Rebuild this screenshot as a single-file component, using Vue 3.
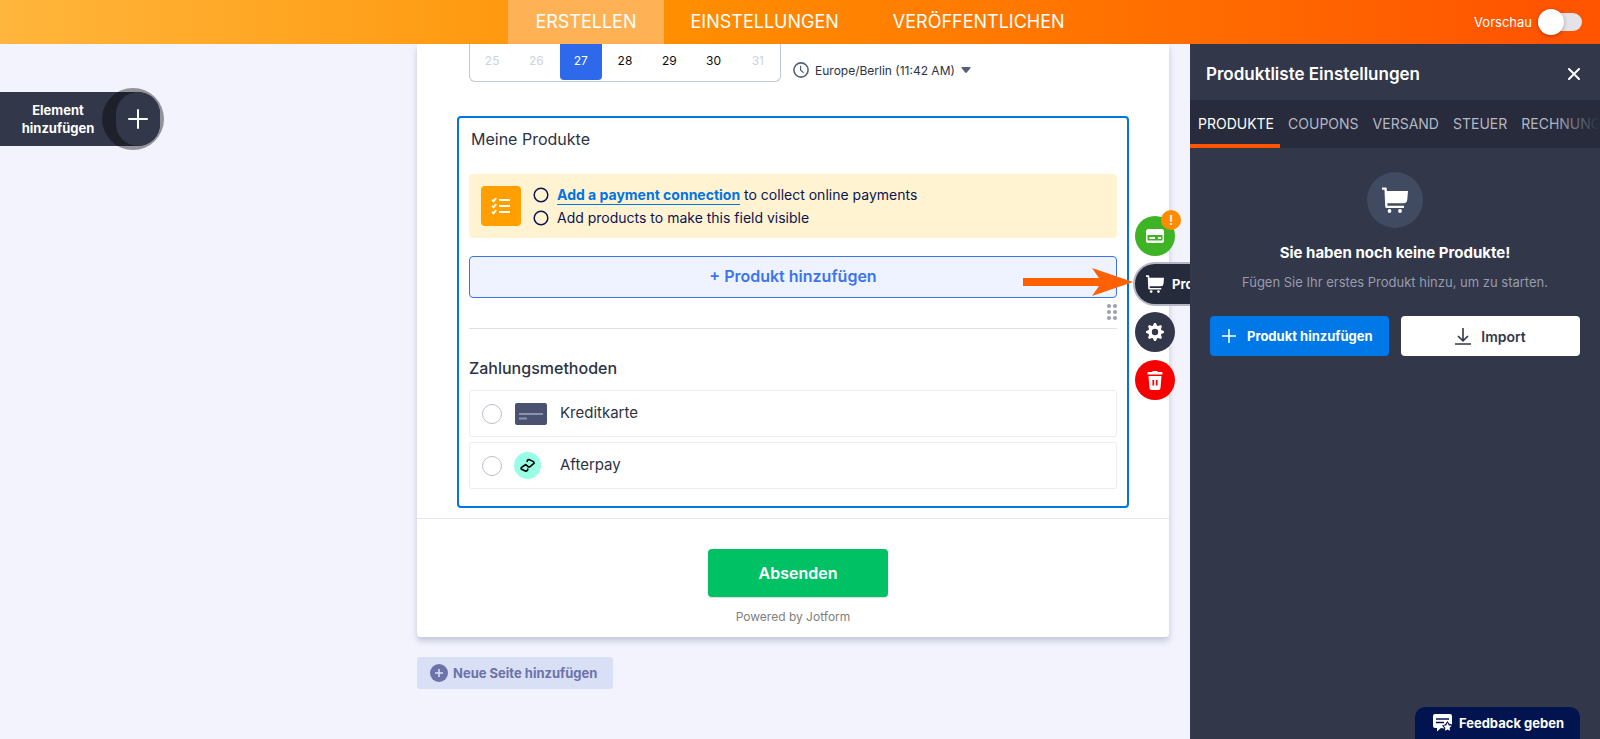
<template>
  <div class="builder">
    <header class="topbar">
      <nav class="topnav">
        <a
          v-for="item in navItems"
          :key="item"
          href="#"
          :class="{ active: item === activeNav }"
          @click.prevent="activeNav = item"
        >{{ item }}</a>
      </nav>
      <label class="preview">
        <span>Vorschau</span>
        <input v-model="preview" type="checkbox" role="switch" />
      </label>
    </header>

    <div class="workspace">
      <main class="canvas">
        <button class="add-element" type="button">
          <span class="add-label">Element hinzufügen</span>
          <span class="ring"></span>
          <span class="add-plus">
            <svg width="20" height="20" viewBox="0 0 20 20">
              <path d="M10 1v18M1 10h18" stroke="#fff" stroke-width="2" stroke-linecap="round" />
            </svg>
          </span>
        </button>

        <div class="form-column">
          <section class="form">
            <div class="appointment">
              <div class="calendar">
                <button
                  v-for="day in days"
                  :key="day.n"
                  type="button"
                  :disabled="day.off"
                  :class="{ selected: day.n === selectedDay }"
                  @click="selectedDay = day.n"
                >{{ day.n }}</button>
              </div>
              <div class="timezone">
                <svg width="16" height="16" viewBox="0 0 16 16" fill="none" stroke="#546079">
                  <circle cx="8" cy="8" r="7.1" stroke-width="1.6" />
                  <path d="M7.6 3.8v4.4l3 2.6" stroke-width="1.2" />
                </svg>
                <select v-model="timezone" aria-label="Zeitzone">
                  <option>Europe/Berlin (11:42 AM)</option>
                </select>
                <svg width="10" height="6" viewBox="0 0 10 6">
                  <path d="M1 0h8q1 0 .5 1L5.800 5.500q-.8.8-1.600 0L.5 1Q0 0 1 0z" fill="#546079" />
                </svg>
              </div>
            </div>

            <div class="product-field">
              <h2 class="field-title">Meine Produkte</h2>

              <div class="notice">
                <span class="notice-icon">
                  <svg width="20" height="18" viewBox="0 0 20 18" fill="none" stroke="#fff" stroke-width="2">
                    <path d="M8 3h11M8 9h11M8 15h11" />
                    <path d="M1 2.800l1.500 1.500L5.200 1M1 8.800l1.500 1.500L5.200 7M1 14.800l1.500 1.500L5.200 13" stroke-width="1.800" />
                  </svg>
                </span>
                <ul>
                  <li v-for="todo in todos" :key="todo.text">
                    <svg width="16" height="16" viewBox="0 0 16 16">
                      <circle cx="8" cy="8" r="6.800" fill="none" stroke="#0a1551" stroke-width="1.500" />
                    </svg>
                    <span><a v-if="todo.link" href="#">{{ todo.link }}</a> {{ todo.text }}</span>
                  </li>
                </ul>
              </div>

              <button class="add-product" type="button">+ Produkt hinzufügen</button>

              <div class="drag-row">
                <svg width="10" height="16" viewBox="0 0 10 16" fill="#9a9fb4">
                  <template v-for="y in [2, 8, 14]" :key="y">
                    <circle cx="2" :cy="y" r="2" />
                    <circle cx="8" :cy="y" r="2" />
                  </template>
                </svg>
              </div>

              <h3 class="methods-title">Zahlungsmethoden</h3>
              <div class="methods">
                <label>
                  <input v-model="method" type="radio" name="method" value="card" />
                  <span class="method-icon">
                    <svg width="33" height="22" viewBox="0 0 33 22">
                      <rect x="1" width="32" height="22" rx="2" fill="#4a5270" />
                      <path d="M5 11h24M5 15.500h8" stroke="#8b91b3" stroke-width="1.800" />
                    </svg>
                  </span>
                  <span class="method-name">Kreditkarte</span>
                </label>
                <label>
                  <input v-model="method" type="radio" name="method" value="afterpay" />
                  <span class="method-icon">
                    <svg width="27" height="27" viewBox="0 0 27 27">
                      <circle cx="13.500" cy="13.500" r="13.500" fill="#98ffe5" />
                      <path
                        d="M13 10L13.600 8L15 7.500L19.500 9.600L20.200 11.200L15.800 14.900L14.300 14.900L11.800 12.500L7.200 15.600L7.200 17L11.700 19.300L13.400 18.600L14 16.500"
                        fill="none" stroke="#000" stroke-width="1.600" stroke-linejoin="round"
                      />
                    </svg>
                  </span>
                  <span class="method-name">Afterpay</span>
                </label>
              </div>

              <!-- field tools, hanging on the right edge -->
              <div class="tools">
                <button class="tool green" type="button" aria-label="Zahlung">
                  <svg width="18" height="14" viewBox="0 0 18 14">
                    <rect width="18" height="14" rx="2.500" fill="#fff" />
                    <rect x="1.500" y="6" width="15" height="5.500" rx=".5" fill="#3eb324" />
                    <path d="M3.500 9h5.500M12 9h3" stroke="#fff" stroke-width="2" />
                  </svg>
                  <b class="badge">!</b>
                </button>
                <button class="tool cart" type="button">
                  <svg width="18" height="18" viewBox="0 0 26 26" fill="#fff">
                    <path :d="cartPath" />
                    <circle cx="7.500" cy="24" r="1.900" />
                    <circle cx="18" cy="24" r="1.900" />
                  </svg>
                  <span>Produkte</span>
                </button>
                <button class="tool" type="button" aria-label="Eigenschaften">
                  <svg width="18" height="18" viewBox="-9 -9 18 18">
                    <path v-for="a in [0, 45, 90, 135]" :key="a" d="M-.8-9h1.600L2.800-5V5L.8 9h-1.600L-2.800 5V-5z" :transform="`rotate(${a})`" fill="#fff" />
                    <circle r="6.400" fill="#fff" />
                    <circle r="3.200" fill="#32374a" />
                  </svg>
                </button>
                <button class="tool red" type="button" aria-label="Löschen">
                  <svg width="16" height="19" viewBox="0 0 16 19">
                    <path d="M.5 2Q.5 1 1.500 1H5l1-1h4l1 1h3.500q1 0 1 1v1.500H.5zM1.500 5h13l-1 12q-.2 2-2 2h-7q-1.800 0-2-2z" fill="#fff" />
                    <path d="M6.300 9v5.500M9.700 9v5.500" stroke="#f90000" stroke-width="1.700" />
                  </svg>
                </button>
              </div>

              <svg class="arrow" width="110" height="28" viewBox="0 0 110 28">
                <path d="M0 10h76L69 0l41 14-41 14 7-10H0z" fill="#ff6100" />
              </svg>
            </div>

            <footer class="form-footer">
              <button class="submit" type="button">Absenden</button>
              <p>Powered by Jotform</p>
            </footer>
          </section>

          <button class="new-page" type="button">
            <svg width="18" height="18" viewBox="0 0 18 18">
              <circle cx="9" cy="9" r="9" fill="#6c73a8" />
              <path d="M9 5v8M5 9h8" stroke="#d9dff5" stroke-width="1.600" />
            </svg>
            Neue Seite hinzufügen
          </button>
        </div>
      </main>

      <aside class="panel">
        <div class="panel-head">
          <h2>Produktliste Einstellungen</h2>
          <button type="button" aria-label="Schließen">
            <svg width="12" height="12" viewBox="0 0 12 12">
              <path d="M1 1l10 10M11 1L1 11" stroke="#fff" stroke-width="2" stroke-linecap="round" />
            </svg>
          </button>
        </div>
        <div class="tabs">
          <button
            v-for="tab in tabs"
            :key="tab"
            type="button"
            :class="{ active: tab === activeTab }"
            @click="activeTab = tab"
          >{{ tab }}</button>
        </div>
        <div class="empty">
          <span class="empty-icon">
            <svg width="26" height="26" viewBox="0 0 26 26" fill="#fff">
              <path :d="cartPath" />
              <circle cx="7.500" cy="24" r="1.900" />
              <circle cx="18" cy="24" r="1.900" />
            </svg>
          </span>
          <h3>Sie haben noch keine Produkte!</h3>
          <p>Fügen Sie Ihr erstes Produkt hinzu, um zu starten.</p>
          <div class="actions">
            <button class="primary" type="button">
              <svg width="14" height="14" viewBox="0 0 14 14">
                <path d="M7 0v14M0 7h14" stroke="#fff" stroke-width="1.500" />
              </svg>
              Produkt hinzufügen
            </button>
            <button class="plain" type="button">
              <svg width="16" height="17" viewBox="0 0 16 17" fill="none" stroke="#32374a" stroke-width="1.600">
                <path d="M8 0v12.500M3 8l5 4.800L13 8M0 16h16" />
              </svg>
              Import
            </button>
          </div>
        </div>
      </aside>
    </div>

    <button class="feedback" type="button">
      <svg width="19" height="18" viewBox="0 0 19 18">
        <path d="M2 0h15q2 0 2 2v8.500l-3-1-1.500-2.500-2.500 3.500-3 1 2.500 3L8 14l-4 3.500V14H2q-2 0-2-2V2q0-2 2-2z" fill="#fff" />
        <path d="M3 5h13M3 8.500h8" stroke="#02144f" stroke-width="1.500" />
        <path d="M14.500 8.800l1.300 2.600 2.900.4-2.100 2 .5 2.900-2.600-1.300-2.600 1.300.5-2.900-2.100-2 2.900-.4z" fill="#fff" />
      </svg>
      Feedback geben
    </button>
  </div>
</template>

<script setup>
import { ref } from 'vue'

const navItems = ['ERSTELLEN', 'EINSTELLUNGEN', 'VERÖFFENTLICHEN']
const activeNav = ref('ERSTELLEN')
const preview = ref(false)

const days = [25, 26, 27, 28, 29, 30, 31].map((n) => ({ n, off: n < 27 || n > 30 }))
const selectedDay = ref(27)
const timezone = ref('Europe/Berlin (11:42 AM)')
const method = ref('')

const todos = [
  { link: 'Add a payment connection', text: 'to collect online payments' },
  { text: 'Add products to make this field visible' },
]

const tabs = ['PRODUKTE', 'COUPONS', 'VERSAND', 'STEUER', 'RECHNUNG']
const activeTab = ref('PRODUKTE')

// shared by the field tool and the empty state
const cartPath = 'M0 .5h3.500q1.300 0 1.300 1.300V4H26l-.7 8.500Q25 16.300 21.500 16.300H5.400l.1 2.400H22v2.300H4.800q-1.500 0-1.600-1.500L2.500 2.800H0z'
</script>

<style>
body {
  background: #f3f3fe;
}
</style>

<style scoped>
.builder {
  display: flex;
  flex-direction: column;
  min-height: 100vh;
  overflow: hidden;
  font-family: Inter, "Liberation Sans", sans-serif;
  color: #2c3345;
}

.builder *, .builder *::before {
  box-sizing: border-box;
}

button, select {
  font: inherit;
  color: inherit;
  border: 0;
  padding: 0;
  margin: 0;
  background: none;
  cursor: pointer;
}

h2, h3, p, ul {
  margin: 0;
  padding: 0;
  font-weight: 400;
}

svg {
  display: block;
  flex: none;
}

/* top bar */
.topbar {
  display: grid;
  grid-template-columns: 1fr auto 1fr;
  height: 44px;
  background: linear-gradient(90deg, #ffb63c 0%, #ff8f00 42%, #ff5400 97%);
  color: #fff;
}

.topnav {
  grid-column: 2;
  display: flex;
}

.topnav a {
  display: flex;
  align-items: center;
  padding: 0 27px 2px;
  font-size: 18px;
  color: #fff;
  text-decoration: none;
}

.topnav a.active {
  background: #ffb255;
}

.preview {
  display: flex;
  align-items: center;
  justify-content: flex-end;
  gap: 6px;
  padding-right: 18px;
  font-size: 13px;
}

.preview input {
  appearance: none;
  position: relative;
  width: 44px;
  height: 18px;
  margin: 0;
  border-radius: 9px;
  background: #e3e3e8;
}

.preview input::before {
  content: "";
  position: absolute;
  left: 0;
  top: -4px;
  width: 26px;
  height: 26px;
  border-radius: 50%;
  background: #fff;
  box-shadow: 0 1px 4px rgba(0, 0, 0, 0.3);
}

.preview input:checked::before {
  left: 18px;
}

.workspace {
  flex: 1;
  display: flex;
}

.canvas {
  flex: 1;
  min-width: 0;
  display: flex;
  justify-content: space-between;
  align-items: flex-start;
  padding-right: 21px;
}

/* add element */
.add-element {
  position: relative;
  display: flex;
  align-items: center;
  width: 160px;
  height: 54px;
  margin-top: 48px;
  border-radius: 0 22px 22px 0;
  background: #32374a;
  color: #fff;
}

.add-label {
  width: 116px;
  padding: 0 16px;
  font-size: 13px;
  font-weight: 700;
  line-height: 18px;
}

.ring {
  position: absolute;
  right: -4px;
  top: -4px;
  width: 62px;
  height: 62px;
  border-radius: 50%;
  background: rgba(0, 0, 0, 0.4);
}

.add-plus {
  position: relative;
  display: flex;
  align-items: center;
  justify-content: center;
  width: 44px;
  height: 54px;
  border-radius: 22px;
  background: #32374a;
}

/* form */
.form-column {
  width: 752px;
}

.form {
  background: #fff;
  border-radius: 0 0 4px 4px;
  box-shadow: 0 4px 6px rgba(84, 95, 140, 0.3);
}

.appointment {
  display: flex;
  align-items: flex-start;
  gap: 12px;
  height: 38px;
  padding: 0 52px;
}

.calendar {
  display: grid;
  grid-template-columns: repeat(7, 1fr);
  width: 312px;
  padding-bottom: 1px;
  border: 1px solid #c0c7dc;
  border-top: 0;
  border-radius: 0 0 6px 6px;
}

.calendar button {
  justify-self: center;
  width: 42px;
  height: 36px;
  padding-bottom: 3px;
  font-size: 12px;
  color: #0a0a0f;
}

.calendar button:disabled {
  color: #cdd2de;
}

.calendar button.selected {
  border-radius: 0 0 4px 4px;
  background: #2e69ec;
  color: #fff;
}

.timezone {
  display: flex;
  align-items: center;
  gap: 6px;
  height: 52px;
}

.timezone select {
  appearance: none;
  font-size: 12px;
}

.product-field {
  position: relative;
  margin: 34px 40px 0;
  padding: 11px 10px 17px;
  border: 2px solid #0075e3;
  border-radius: 4px;
}

.field-title {
  padding-left: 2px;
  font-size: 16px;
  line-height: 20px;
}

.notice {
  display: flex;
  align-items: center;
  gap: 12px;
  height: 64px;
  margin-top: 25px;
  padding: 0 12px;
  border-radius: 4px;
  background: #fff3d2;
  color: #0a1551;
  font-size: 14px;
}

.notice-icon {
  display: flex;
  align-items: center;
  justify-content: center;
  width: 40px;
  height: 40px;
  border-radius: 4px;
  background: #ffa000;
}

.notice li {
  display: flex;
  align-items: center;
  gap: 8px;
  line-height: 23px;
}

.notice a {
  padding-bottom: 1px;
  border-bottom: 1px solid #0075e3;
  color: #0075e3;
  font-weight: 700;
  text-decoration: none;
}

.add-product {
  display: block;
  width: 100%;
  height: 42px;
  margin-top: 18px;
  padding-bottom: 2px;
  border: 1px solid #3b74ea;
  border-radius: 4px;
  background: #eef3ff;
  color: #3b74f0;
  font-size: 16px;
  font-weight: 600;
}

.drag-row {
  display: flex;
  justify-content: flex-end;
  height: 31px;
  padding-top: 6px;
  border-bottom: 1px solid #dde0ea;
}

.methods-title {
  margin-top: 29px;
  font-size: 16px;
  font-weight: 500;
  line-height: 20px;
}

.methods {
  display: flex;
  flex-direction: column;
  gap: 5px;
  margin-top: 12px;
}

.methods label {
  display: flex;
  align-items: center;
  height: 47px;
  padding-left: 12px;
  border: 1px solid #ecedf0;
  border-radius: 3px;
  font-size: 15px;
}

.methods input {
  appearance: none;
  width: 20px;
  height: 20px;
  margin: 0 12px 0 0;
  border: 1px solid #bbc0ce;
  border-radius: 50%;
  background: #fff;
}

.methods input:checked {
  border: 6px solid #2e69ff;
}

.method-icon {
  width: 46px;
}

.method-name {
  padding-bottom: 2px;
}

.tools {
  position: absolute;
  left: 100%;
  top: 98px;
  margin-left: 8px;
  display: flex;
  flex-direction: column;
  gap: 8px;
}

.tool {
  position: relative;
  display: flex;
  align-items: center;
  justify-content: center;
  width: 40px;
  height: 40px;
  border-radius: 50%;
  background: #32374a;
}

.tool.green {
  background: #3eb324;
}

.tool.red {
  background: #f90000;
}

.tool.cart {
  justify-content: flex-start;
  gap: 8px;
  width: 120px;
  padding-left: 11px;
  border-radius: 20px;
  background: #262b3b;
  box-shadow: 0 0 0 2px #b4b6c8;
  color: #fff;
  font-size: 13px;
  font-weight: 700;
}

.badge {
  position: absolute;
  right: -6px;
  top: -6px;
  width: 20px;
  border-radius: 50%;
  background: #ff8b00;
  color: #fff;
  font-size: 13px;
  font-weight: 600;
  line-height: 20px;
}

.arrow {
  position: absolute;
  right: -6px;
  top: 150px;
}

.form-footer {
  display: flex;
  flex-direction: column;
  align-items: center;
  margin-top: 10px;
  padding: 30px 0 12px;
  border-top: 1px solid #e3e5f0;
}

.submit {
  width: 180px;
  height: 48px;
  margin-left: 10px;
  border-radius: 4px;
  background: #01c165;
  box-shadow: 0 1px 1px rgba(0, 0, 0, 0.15);
  color: #fff;
  font-size: 16px;
  font-weight: 600;
}

.form-footer p {
  margin-top: 12px;
  font-size: 12px;
  line-height: 16px;
  color: #808080;
}

.new-page {
  display: flex;
  align-items: center;
  gap: 5px;
  height: 32px;
  margin: 20px 0;
  padding: 0 16px 0 13px;
  border-radius: 3px;
  background: #d9dff5;
  color: #6c73a8;
  font-size: 13px;
  font-weight: 700;
}

/* settings panel */
.panel {
  position: relative;
  flex: none;
  width: 410px;
  background: #32374a;
  color: #fff;
}

.panel-head {
  display: flex;
  align-items: center;
  justify-content: space-between;
  height: 56px;
  padding: 4px 20px 0 16px;
}

.panel-head h2 {
  font-size: 17px;
  font-weight: 600;
}

.tabs {
  position: relative;
  display: flex;
  height: 48px;
  overflow: hidden;
  background: #272b3b;
}

/* fade of the tabs that run past the edge */
.tabs::after {
  content: "";
  position: absolute;
  right: 0;
  top: 0;
  width: 48px;
  height: 48px;
  background: linear-gradient(90deg, rgba(39, 43, 59, 0), #272b3b);
}

.tabs button {
  flex: none;
  padding: 2px 6px 0 8px;
  border-bottom: 4px solid transparent;
  font-size: 14px;
  color: #b3b8c5;
}

.tabs button.active {
  border-bottom-color: #ff5400;
  color: #fff;
}

.empty {
  display: flex;
  flex-direction: column;
  align-items: center;
  padding: 24px 20px;
}

.empty-icon {
  display: flex;
  align-items: center;
  justify-content: center;
  width: 56px;
  height: 56px;
  border-radius: 50%;
  background: #404a60;
}

.empty h3 {
  margin-top: 15px;
  font-size: 15px;
  font-weight: 700;
  line-height: 20px;
}

.empty p {
  margin-top: 9px;
  font-size: 13px;
  line-height: 20px;
  color: #979cac;
}

.actions {
  display: grid;
  grid-template-columns: 1fr 1fr;
  gap: 12px;
  width: 100%;
  margin-top: 24px;
}

.actions button {
  display: flex;
  align-items: center;
  height: 40px;
  border-radius: 4px;
  font-size: 13px;
  font-weight: 700;
}

.actions .primary {
  gap: 11px;
  padding-left: 12px;
  background: #0078e8;
}

.actions .plain {
  justify-content: center;
  gap: 10px;
  background: #fff;
  color: #32374a;
  font-size: 14px;
  font-weight: 600;
}

.feedback {
  position: fixed;
  right: 20px;
  bottom: 0;
  display: flex;
  align-items: center;
  gap: 7px;
  height: 32px;
  padding: 0 16px 0 18px;
  border-radius: 10px 10px 0 0;
  background: #02144f;
  color: #fff;
  font-size: 13px;
  font-weight: 700;
}
</style>
